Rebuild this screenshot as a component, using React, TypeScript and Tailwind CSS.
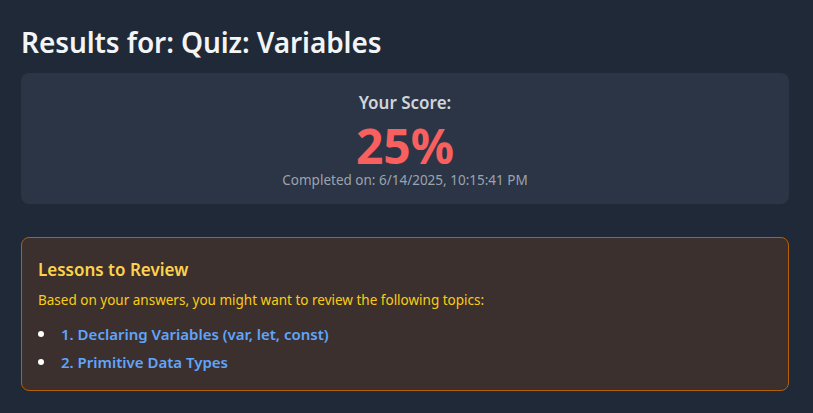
import React from "react";

const lessons = ["1. Declaring Variables (var, let, const)", "2. Primitive Data Types"];

export default function App() {
  return (
    <div
      className="min-h-screen w-full bg-[#1f2937] text-white"
      style={{ fontFamily: '"Noto Sans", "Open Sans", sans-serif' }}
    >
      <div className="ml-[21px] w-[768px] pt-6 pb-6">
        <h1 className="text-[28px] leading-9 font-semibold text-[#f3f4f6] mb-[13px] tracking-[-0.1px]">
          Results for: Quiz: Variables
        </h1>
        <div className="rounded-lg bg-[#2b3546] px-4 pt-4 pb-[14px] text-center">
          <div className="text-[17px] leading-7 font-semibold text-[#d1d5db]">Your Score:</div>
          <div className="text-5xl leading-[48px] font-bold text-[#f86060] mt-[5px]">25%</div>
          <div className="text-[13.5px] leading-5 text-[#9ca3af]">
            Completed on: 6/14/2025, 10:15:41 PM
          </div>
        </div>
        <div className="mt-[33px] rounded-lg border border-[#b45f06] bg-[#3b302e] px-4 pt-[18px] pb-[18px]">
          <h2 className="text-[17px] leading-7 font-semibold text-[#fcd34d] mb-1.5">
            Lessons to Review
          </h2>
          <p className="text-[13.5px] leading-5 text-[#facc15] mb-[14px]">
            Based on your answers, you might want to review the following topics:
          </p>
          <ul className="list-none space-y-2">
            {lessons.map((l) => (
              <li key={l} className="flex items-center text-[15px] leading-5">
                <span className="w-1.5 h-1.5 rounded-full bg-white mr-[17px] shrink-0" />
                <span className="font-semibold text-[#60a5fa]">{l}</span>
              </li>
            ))}
          </ul>
        </div>
      </div>
    </div>
  );
}
